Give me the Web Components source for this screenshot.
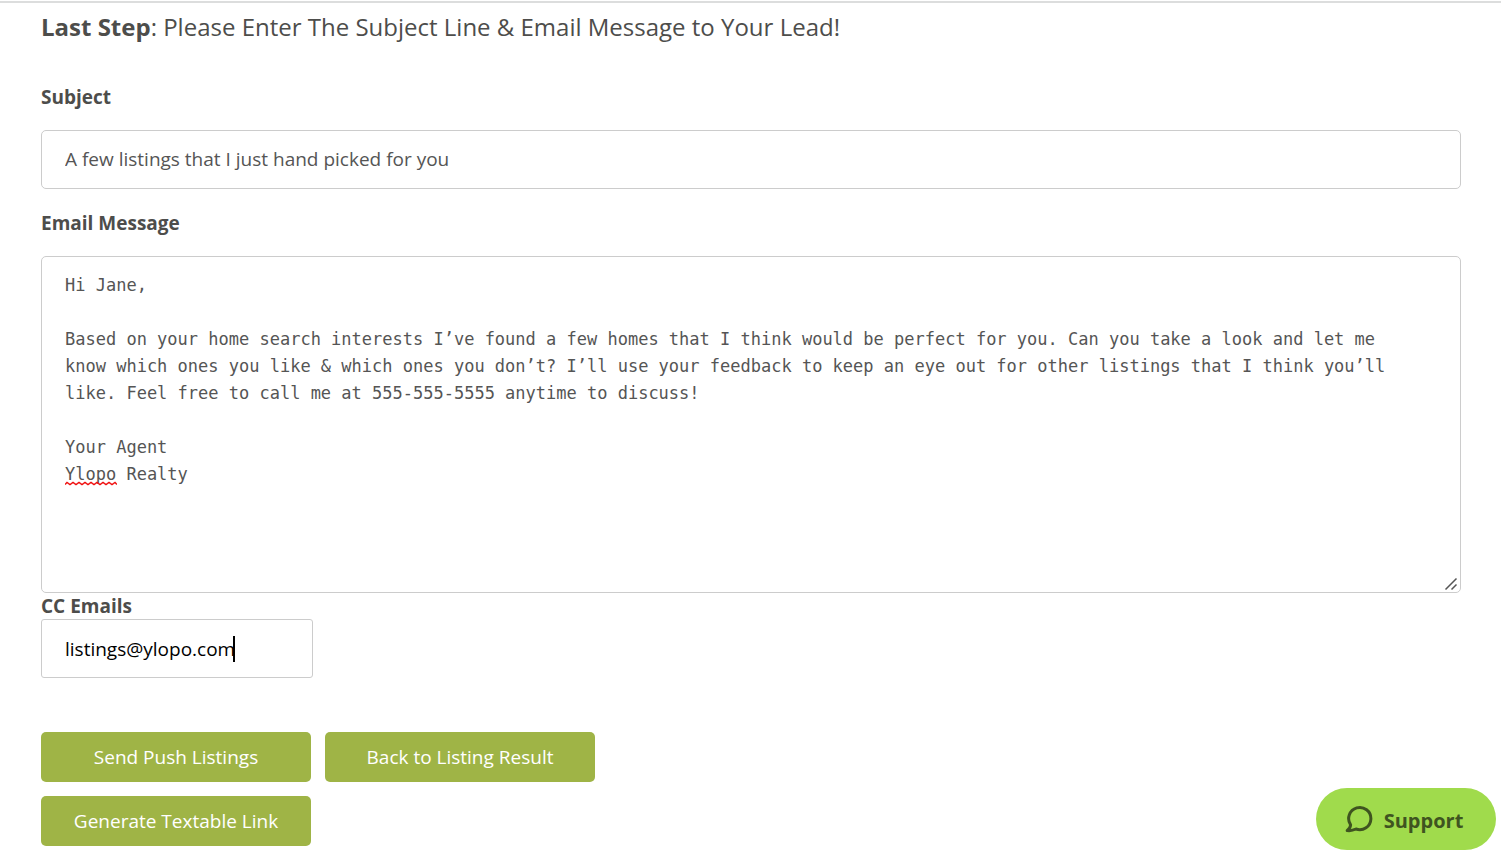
<!DOCTYPE html>
<html lang="en">
<head>
<meta charset="utf-8">
<meta name="viewport" content="width=device-width, initial-scale=1">
<title>Push Listings</title>
<style>
  body { margin: 0; background: #fff; color: #4d4d4b; font: 19px/26px "Open Sans", sans-serif; }
</style>
</head>
<body>
<push-listings-page></push-listings-page>
<script>
class BaseElement extends HTMLElement {
  constructor() {
    super();
    this.attachShadow({ mode: "open" }).innerHTML = this.render();
  }
}

customElements.define("step-heading", class extends BaseElement {
  render() {
    return `<style>
      :host { display: block; }
      h1 { margin: 0; font-size: 24px; line-height: 34px; font-weight: 400; }
    </style><h1><slot></slot></h1>`;
  }
});

customElements.define("subject-field", class extends BaseElement {
  render() {
    return `<style>
      :host { display: block; }
      label { display: block; font-weight: 700; margin-bottom: 20px; }
      input { display: block; box-sizing: border-box; width: 100%; height: 59px; margin: 0; padding: 0 23px 1px; border: 1px solid #ccc; border-radius: 5px; background: #fff; color: #555; font: inherit; }
    </style>
    <label for="subject">Subject</label>
    <input id="subject" type="text" value="A few listings that I just hand picked for you">`;
  }
});

customElements.define("message-field", class extends BaseElement {
  render() {
    return `<style>
      :host { display: block; }
      label { display: block; font-weight: 700; margin-bottom: 20px; }
      .box { position: relative; }
      textarea { display: block; box-sizing: border-box; width: 100%; height: 337px; margin: 0; padding: 15px 36px 15px 23px; border: 1px solid #ccc; border-radius: 5px; background: #fff; color: #555; font: 17px/27px "DejaVu Sans Mono", monospace; resize: vertical; }
      textarea::-webkit-resizer { background: transparent; }
      svg { position: absolute; pointer-events: none; fill: none; }
      .spelling { left: 24px; top: 225px; }
      .grip { right: 3px; bottom: 2px; }
    </style>
    <label for="message">Email Message</label>
    <div class="box">
      <textarea id="message" spellcheck="false">Hi Jane,

Based on your home search interests I’ve found a few homes that I think would be perfect for you. Can you take a look and let me know which ones you like &amp; which ones you don’t? I’ll use your feedback to keep an eye out for other listings that I think you’ll like. Feel free to call me at 555-555-5555 anytime to discuss!

Your Agent
Ylopo Realty</textarea>
      <svg class="spelling" width="52" height="5" aria-hidden="true" stroke="#f01414" stroke-width="1.5"><path d="M0 3.5l2-2 3 2 3-2 3 2 3-2 3 2 3-2 3 2 3-2 3 2 3-2 3 2 3-2 3 2 3-2 3 2 3-2 2 2"/></svg>
      <svg class="grip" width="14" height="14" aria-hidden="true" stroke="#555" stroke-width="1.5"><path d="M1.500 12.500L12.500 1.500M7.500 12.500L12.500 7.500"/></svg>
    </div>`;
  }
});

customElements.define("cc-field", class extends BaseElement {
  render() {
    return `<style>
      :host { display: block; }
      label { display: block; font-weight: 700; }
      .box { position: relative; width: 272px; }
      input { display: block; box-sizing: border-box; width: 100%; height: 59px; margin: 0; padding: 0 23px; border: 1px solid #ccc; border-radius: 3px; background: #fff; color: #000; font: inherit; }
      .caret { position: absolute; left: 192px; top: 17px; width: 2px; height: 26px; background: #000; }
    </style>
    <label for="cc">CC Emails</label>
    <div class="box">
      <input id="cc" type="email" value="listings@ylopo.com">
      <span class="caret" aria-hidden="true"></span>
    </div>`;
  }
});

customElements.define("action-button", class extends BaseElement {
  render() {
    return `<style>
      :host { display: block; }
      button { display: block; width: 100%; height: 50px; margin: 0; padding: 0 12px; border: 0; border-radius: 5px; background: #9fb446; color: #fff; font: inherit; cursor: pointer; }
    </style><button type="button"><slot></slot></button>`;
  }
});

customElements.define("action-group", class extends BaseElement {
  render() {
    return `<style>
      :host { display: grid; grid-template-columns: repeat(2, 270px); gap: 14px; }
    </style><slot></slot>`;
  }
});

customElements.define("support-launcher", class extends BaseElement {
  render() {
    return `<style>
      :host { display: block; position: fixed; right: 5px; bottom: 3px; }
      button { display: flex; align-items: center; justify-content: center; gap: 11px; width: 180px; height: 62px; margin: 0; padding: 0 4px 0 0; border: 0; border-radius: 31px; background: #a0db4c; color: #3f5420; font: 700 20px/26px "Open Sans", sans-serif; cursor: pointer; }
      span { padding-top: 4px; }
    </style>
    <button type="button">
      <svg width="28" height="28" viewBox="0 0 28 28" fill="none" stroke="currentColor" stroke-width="3" stroke-linejoin="round" aria-hidden="true"><path d="M5.600 19.800A11.100 11.100 0 1 1 11 24C8 25.400 5 25.900 2.200 25.500C4.300 24 5.400 22.200 5.600 19.800Z"/></svg>
      <span><slot></slot></span>
    </button>`;
  }
});

customElements.define("push-listings-page", class extends BaseElement {
  render() {
    return `<style>
      :host { display: block; padding-top: 1px; }
      main { border-top: 2px solid #dcdddd; padding: 7px 40px 7px 41px; }
      subject-field { margin-top: 40px; }
      message-field { margin-top: 21px; }
      action-group { margin-top: 54px; }
      b { font-weight: 700; }
    </style>
    <main>
      <step-heading><b>Last Step</b>: Please Enter The Subject Line &amp; Email Message to Your Lead!</step-heading>
      <subject-field></subject-field>
      <message-field></message-field>
      <cc-field></cc-field>
      <action-group>
        <action-button>Send Push Listings</action-button>
        <action-button>Back to Listing Result</action-button>
        <action-button>Generate Textable Link</action-button>
      </action-group>
    </main>
    <support-launcher>Support</support-launcher>`;
  }
});
</script>
</body>
</html>
